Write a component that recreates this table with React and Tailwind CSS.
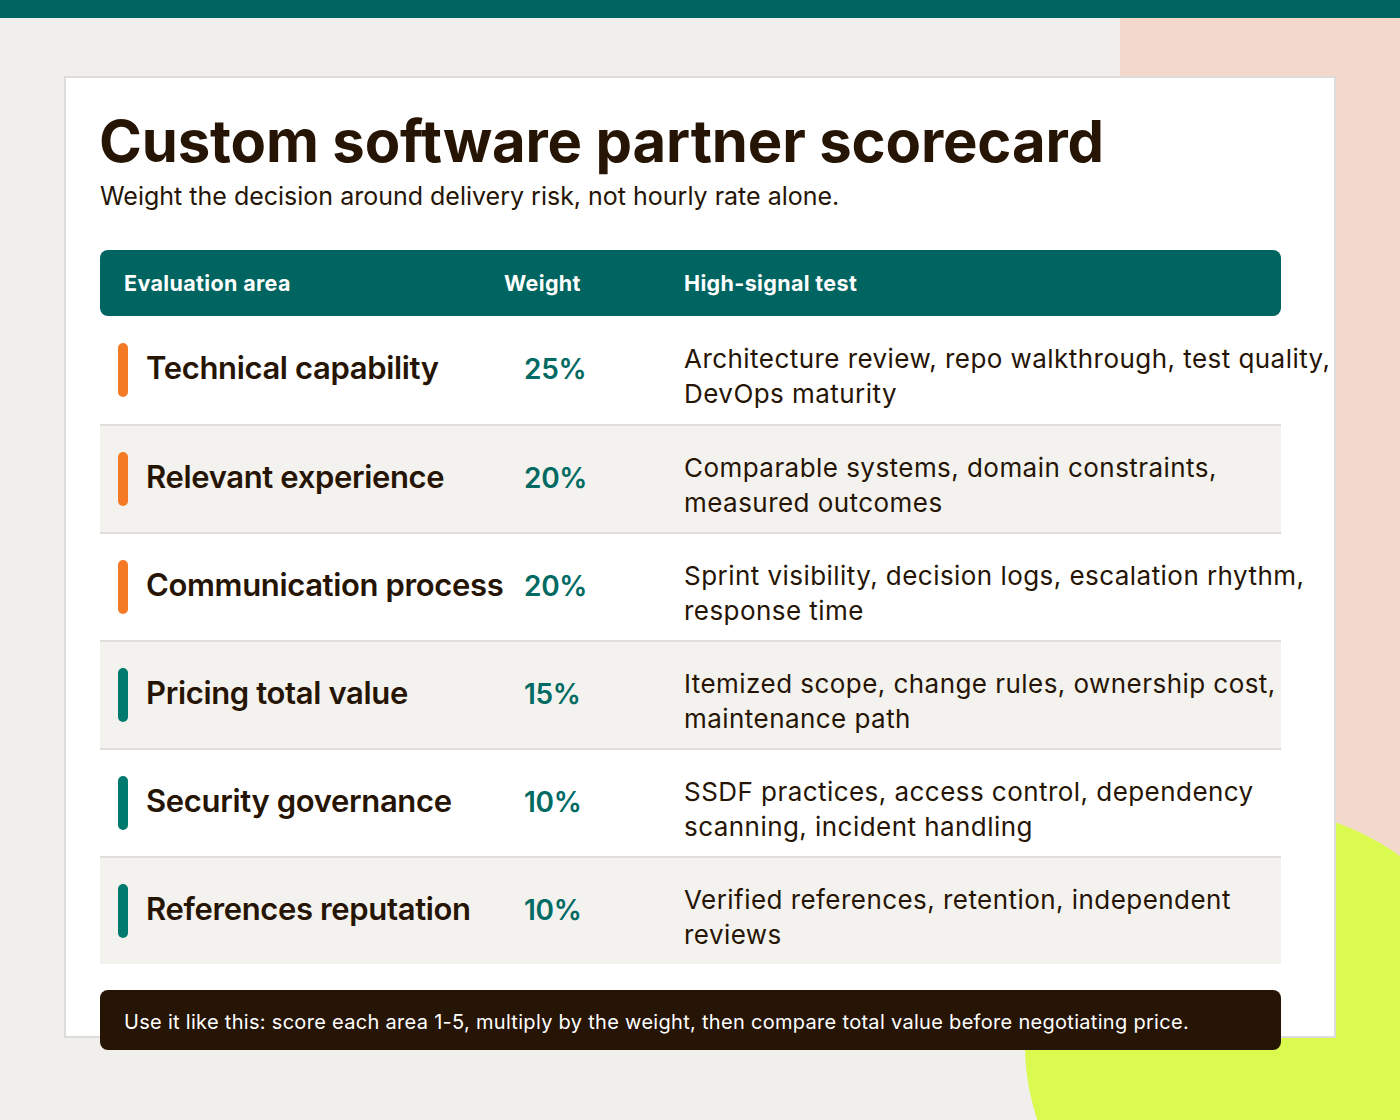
import React from "react";

const rows = [
  { title: "Technical capability", weight: "25%", color: "bg-[#f47a26]", lines: ["Architecture review, repo walkthrough, test quality,", "DevOps maturity"] },
  { title: "Relevant experience", weight: "20%", color: "bg-[#f47a26]", lines: ["Comparable systems, domain constraints,", "measured outcomes"] },
  { title: "Communication process", weight: "20%", color: "bg-[#f47a26]", lines: ["Sprint visibility, decision logs, escalation rhythm,", "response time"] },
  { title: "Pricing total value", weight: "15%", color: "bg-[#00796f]", lines: ["Itemized scope, change rules, ownership cost,", "maintenance path"] },
  { title: "Security governance", weight: "10%", color: "bg-[#00796f]", lines: ["SSDF practices, access control, dependency", "scanning, incident handling"] },
  { title: "References reputation", weight: "10%", color: "bg-[#00796f]", lines: ["Verified references, retention, independent", "reviews"] },
];

export default function App() {
  return (
    <div
      className="relative w-[1400px] h-[1120px] overflow-hidden bg-[#f0efeb] text-[#261505]"
      style={{ fontFamily: "Inter, 'Noto Sans', sans-serif" }}
    >
      <div className="absolute left-[1120px] top-[18px] w-[280px] h-[1000px] bg-[#f2d9cc]" />
      <div className="absolute left-[1025px] top-[810px] w-[470px] h-[470px] rounded-full bg-[#dbfa50]" />
      <div className="relative h-[18px] bg-[#006461]" />
      <div className="relative ml-[64px] mt-[58px] w-[1272px] h-[962px] bg-white border-2 border-[#dddcda] pl-[33px] pt-[34px]">
        <h1 className="text-[58px] leading-none font-bold tracking-[-0.15px]">Custom software partner scorecard</h1>
        <p className="mt-[11px] text-[25px] leading-[30px] pl-[1px]">Weight the decision around delivery risk, not hourly rate alone.</p>
        <div className="mt-[39px] w-[1181px] ml-[1px]">
          <div className="flex items-center h-[66px] rounded-lg bg-[#006461] text-white text-[21.5px] font-bold tracking-[0.35px] pl-[24px] pt-[1px]">
            <div className="w-[380px]">Evaluation area</div>
            <div className="w-[180px]">Weight</div>
            <div>High-signal test</div>
          </div>
          {rows.map((r, i) => (
            <div
              key={r.title}
              className={`flex items-center h-[108px] ${i > 0 ? "border-t-2 border-[#dfdedb]" : ""} ${i % 2 === 1 ? "bg-[#f4f2ee]" : "bg-white"}`}
            >
              <div className="w-[424px] shrink-0 flex items-center pl-[18px] gap-[18px]">
                <div className={`w-[10px] h-[54px] rounded-full ${r.color}`} />
                <div className="text-[31px] font-semibold whitespace-nowrap tracking-[-0.35px] -mt-[3px]">{r.title}</div>
              </div>
              <div className="w-[160px] shrink-0 text-[28px] font-semibold text-[#006a63] tracking-[-0.3px] -mt-[3px]">{r.weight}</div>
              <div className="shrink-0 pt-[12px] text-[26px] leading-[35px] whitespace-nowrap tracking-[0.45px]">
                <div>{r.lines[0]}</div>
                <div>{r.lines[1]}</div>
              </div>
            </div>
          ))}
          <div className="mt-[26px] h-[60px] rounded-lg bg-[#261505] text-white text-[20px] tracking-[0.3px] flex items-center pl-[24px] pt-[3px]">
            Use it like this: score each area 1-5, multiply by the weight, then compare total value before negotiating price.
          </div>
        </div>
      </div>
    </div>
  );
}
